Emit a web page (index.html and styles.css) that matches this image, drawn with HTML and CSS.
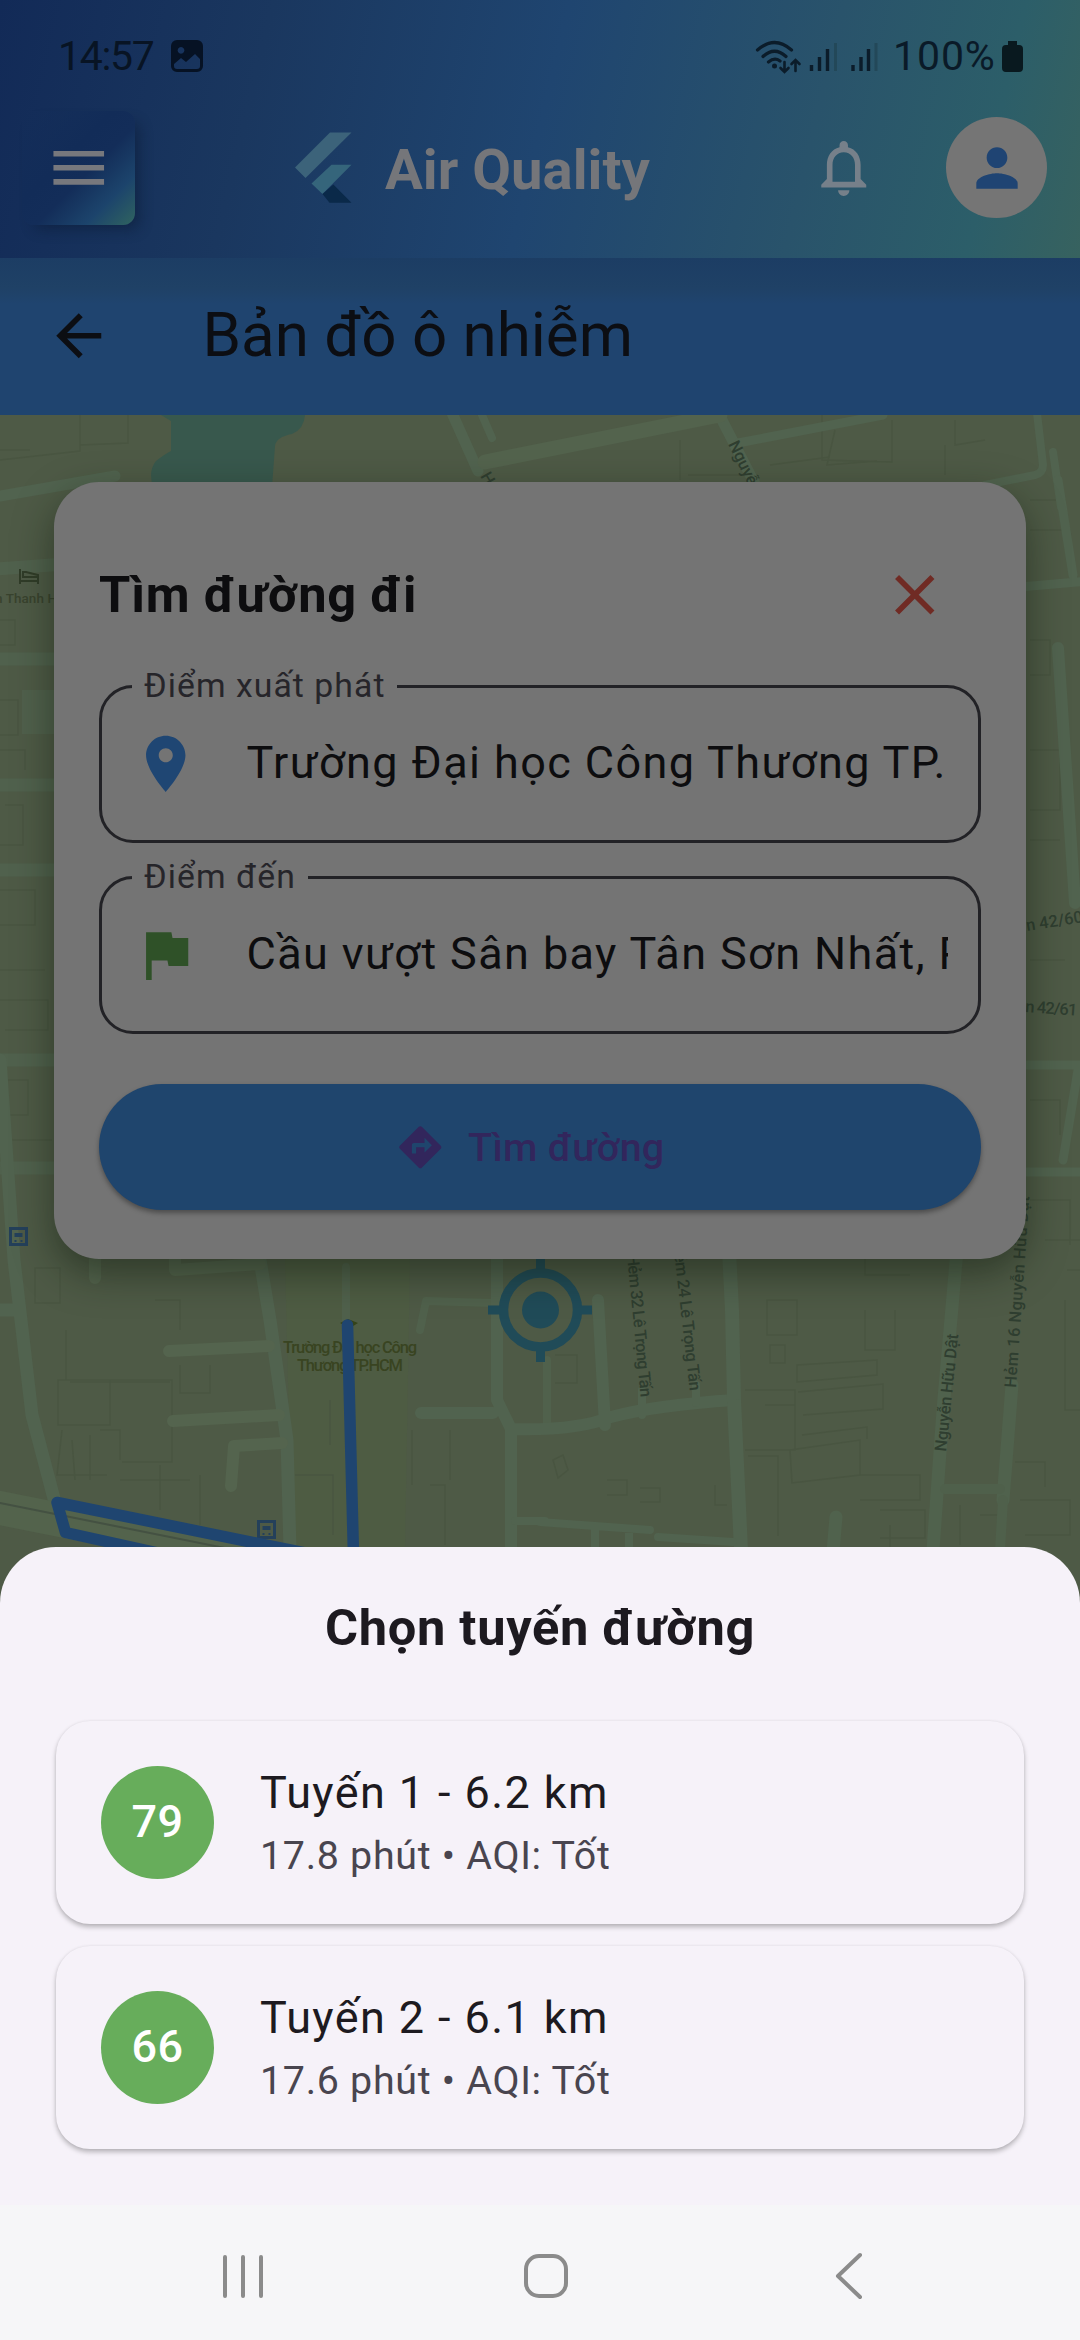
FILE: index.html
```html
<!DOCTYPE html>
<html lang="vi">
<head>
<meta charset="utf-8">
<title>Air Quality</title>
<link rel="stylesheet" href="styles.css">
</head>
<body>
<div class="screen">
  <header class="header">
    <div class="status">
      <span class="clock">14:57</span>
      <svg class="photo" width="32" height="32" viewBox="0 0 32 32"><path fill="#061224" fill-rule="evenodd" d="M6 0h20a6 6 0 0 1 6 6v20a6 6 0 0 1-6 6H6a6 6 0 0 1-6-6V6a6 6 0 0 1 6-6zM10 7a3.400 3.400 0 1 0 .01 0zM3 24l7-6 5 4 9-8 5 5v7q0 3-3 3H6q-3 0-3-3z"/></svg>
      <svg class="signals" width="124" height="36" viewBox="754 37 124 36">
        <g fill="none" stroke="#0b1c2a" stroke-width="3.200" stroke-linecap="round">
          <path d="M757.500 49Q774.500 34 791.500 49M763 55.500Q774.500 45 786 55.500M768.500 61Q774.500 56 780 60"/>
          <path stroke-width="2.600" d="M784.500 61v9M780.500 67l4 4 4-4M795.500 70V59.500M791.500 63l4-4 4 4"/>
        </g>
        <circle cx="774.500" cy="65" r="2.500" fill="#0b1c2a"/>
        <path stroke="#0b1c2a" stroke-width="3.400" d="M811.500 70v-6M819.500 70V56M827.500 70V48M853 70v-6M861 70V56M868.500 70V48"/>
        <path stroke="#234859" stroke-width="3" d="M835.500 70V42M876 70V42"/>
      </svg>
      <span class="percent">100%</span>
      <svg class="battery" width="21" height="31" viewBox="0 0 21 31"><path fill="#09191f" d="M6 0h9v4h2a4 4 0 0 1 4 4v19a4 4 0 0 1-4 4H4a4 4 0 0 1-4-4V8a4 4 0 0 1 4-4h2z"/></svg>
    </div>
    <div class="appbar">
      <div class="menu"><svg width="67.500" height="67.500" viewBox="0 0 24 24"><path fill="#77787d" d="M3 18h18v-2H3zM3 13h18v-2H3zM3 6v2h18V6z"/></svg></div>
      <svg class="logo" width="58" height="72" viewBox="294 132 58 72">
        <path fill="#3c637a" d="M295 167.500L330 132.500h21.500L305.500 178z"/>
        <path fill="#35657b" d="M311.500 183.500l20-18.800h20L322.500 194z"/>
        <path fill="#0a2949" d="M322.500 194l10.800-9.500 18.200 18.200h-22z"/>
      </svg>
      <h1 class="brand">Air Quality</h1>
      <svg class="bell" width="67.500" height="67.500" viewBox="0 0 24 24"><path fill="#76808a" d="M12 22c1.100 0 2-.9 2-2h-4c0 1.100.9 2 2 2zm6-6v-5c0-3.070-1.630-5.640-4.500-6.320V4c0-.83-.67-1.500-1.500-1.500s-1.500.67-1.500 1.500v.68C7.640 5.360 6 7.920 6 11v5l-2 2v1h16v-1l-2-2zm-2 1H8v-6c0-2.480 1.510-4.500 4-4.500s4 2.020 4 4.500v6z"/></svg>
      <div class="avatar"><svg width="62" height="62" viewBox="0 0 24 24"><path fill="#1f4473" d="M12 12c2.210 0 4-1.790 4-4s-1.790-4-4-4-4 1.790-4 4 1.790 4 4 4zm0 2c-2.670 0-8 1.340-8 4v2h16v-2c0-2.660-5.330-4-8-4z"/></svg></div>
    </div>
  </header>

  <div class="subbar">
    <svg width="67.500" height="67.500" viewBox="0 0 24 24"><path fill="#0c0e13" d="M20 11H7.830l5.590-5.590L12 4l-8 8 8 8 1.410-1.410L7.830 13H20v-2z"/></svg>
    <h2 class="page-title">Bản đồ ô nhiễm</h2>
  </div>

  <main class="map">
    <svg class="tiles" width="1080" height="1200" viewBox="0 415 1080 1200">
      <rect x="0" y="415" width="1080" height="1200" fill="#4e5a46"/>
      <path fill="#4f5d42" d="M285 1258h125l-5 290H292z" opacity=".7"/>
      <!-- building footprints -->
      <g fill="none" stroke="#495541" stroke-width="1.500">
        <path d="M0 460l80-9V415M80 445l48-2V415M0 450h30M680 440v40M688 475h70M835 430l-8 35 50-4M822 415v45l70 2v-42M945 445v30M955 420v25l30-5M770 465l60-8"/>
        <path d="M0 620h15v25H0M0 700h18v35H0M0 750h25v20M5 805h18v40H0M0 890h35v35H0M0 970h45M0 1000h48v30H5M8 1080h20v35H8M0 1140h52"/>
        <path d="M1030 500h35v30h-35M1030 640h20v35h-20M1030 750h30v60h-30M1030 840h30M1030 960h35M1030 1100h30v35M1030 1200h40v45"/>
        <path d="M35 1268h25v35H35zM66 1330v50h-8v45h52v-45H66M110 1380h62v82h-50M70 1382h100M180 1365v28h30v-28M62 1430l-5 45h50M72 1440l3 40M90 1435v45M100 1430h20v30M120 1480h70M160 1465v45M200 1475v50M295 1475h38v60M412 1430v55M430 1485h15v60M450 1430v50M330 1400v45M155 1300h25v30"/>
        <path d="M767 1300h30v35h-30zM770 1345h15v18h-15zM797 1365l80-5v15l-80 7zM798 1392l85-8v25l-80 6M745 1390h50v60h-50M765 1405h30v25M790 1450l70-10v35l-68 8zM802 1435l65-8v12M748 1456h30v80M860 1475h60v25h-60M880 1510h45v28h-45M910 1275h-45v-20M865 1310v40h30v-40M1015 1462h30v25M1020 1500h50v35h-45M1065 1300v110h30M555 1355h22v28h-22M553 1460l10-5 5 15-10 8zM607 1480h20v15h-20M640 1488h20v14h-20M715 1485v20h12"/>
        <path d="M1045 1240h35M1067 1270h20M890 1525v22M960 1505v40M980 1515h25"/>
      </g>
      <!-- water -->
      <path fill="#38584d" d="M161 415h144q-1 14-13 19-16 3-17 12l-3 41H153q-5-16 3-26 9-7 15-10v-30z"/>
      <!-- streets -->
      <g fill="none" stroke="#51634f" stroke-linejoin="round" stroke-linecap="round">
        <path stroke-width="11" d="M452 413l26 58M722 420l36 70M0 496l115-20"/>
        <path stroke-width="8" d="M482 415l10 23M1037 413l6 52q0 8-8 10l-50 10M1053 452l8 55"/>
        <path stroke-width="15" stroke="#53634d" d="M485 462l235-47"/>
        <path stroke-width="9" d="M738 443l145-28"/>
        <path stroke-width="13" d="M-5 569l70-5M-5 659h70M-5 785h70M-5 870h70M-5 1060h70M-5 1168h70" opacity=".8"/>
        <path stroke-width="9" d="M1058 480l15 95M1020 587l70-6M1020 1065h70M1078 1070l-15 90M1020 1172h70"/>
        <path stroke-width="12" d="M1058 648l17 255"/>
        <path fill="#51634f" stroke="none" d="M22 690h50v44H22z" opacity=".7"/>
        <path stroke-width="13" d="M0 1060l14 200 18 155 25 95M255 1230l15 90 17 120 3 110M-5 1310h20"/>
        <path stroke-width="12" d="M169 1351l100-5M173 1421l106-6M231 1486l3-40 48-3M175 1240v30l85-6M95 1250v28" stroke="#54644e"/>
        <path stroke-width="8" d="M346 1267v55M420 1330l6-29 66 2M547 1360v70" stroke="#50614c"/>
        <path stroke-width="12" d="M421 1413h72M497 1250v150l14 29v125M511 1429q65 2 100-12 45-12 124-17M598 1300l7 125"/>
        <path stroke-width="14" d="M729 1250l3 60 2 90 7 150"/>
        <path stroke-width="8" d="M642 1390v25M696 1385v18M540 1522l110 8M658 1537l75 5M595 1530v20M629 1530v20M515 1521h30"/>
        <path stroke-width="13" d="M836 1517l-3 35M957 1250l-14 160-10 140M1012 1385l-9 115" stroke="#50624d"/>
        <path stroke-width="10" d="M945 1489h55M1003 1500l-3 50" stroke="#4f604b"/>
        <path stroke-width="34" d="M-20 1504l330 66" stroke="#53634c"/>
        <path stroke-width="2" d="M0 1503l300 60" stroke="#445142"/>
      </g>
      <!-- place labels -->
      <g class="labels">
        <text x="350" y="1353" text-anchor="middle" textLength="134" fill="#394421">Trường Đại học Công</text>
        <text x="350" y="1371" text-anchor="middle" textLength="106" fill="#394421">Thương TP.HCM</text>
        <text transform="translate(627 1255) rotate(84.500)" textLength="143">Hẻm 32 Lê Trọng Tấn</text>
        <text transform="translate(673 1243) rotate(83.500)" textLength="149">Hẻm 24 Lê Trọng Tấn</text>
        <text transform="translate(946 1452) rotate(-84)" textLength="118">Nguyễn Hữu Dật</text>
        <text transform="translate(1016 1388) rotate(-86)" textLength="192">Hẻm 16 Nguyễn Hữu Dật</text>
        <text transform="translate(1027 931) rotate(-9)">n 42/60</text>
        <text transform="translate(1025 1012) rotate(4)" textLength="52">n 42/61</text>
        <text x="-5" y="603" textLength="62" class="small">n Thanh H</text>
        <text transform="translate(480 476) rotate(60)">Hẻm</text>
        <text transform="translate(728 444) rotate(64)">Nguyễn</text>
      </g>
      <path fill="none" stroke="#303c28" stroke-width="2" d="M20 569v15M20 581h18v3M38 580v-5l-12-3h-3v5h15"/>
      <!-- bus stops -->
      <g id="stops">
        <path fill="#24405a" fill-rule="evenodd" d="M9 1227h19v19H9zM12 1230v13h13v-13z"/>
        <path fill="#24405a" fill-rule="evenodd" d="M257 1520h19v19h-19zM260 1523v13h13v-13z"/>
        <path fill="#24405a" d="M14.500 1233h8v4h-8zM14.500 1240h2v2h-2zM20.500 1240h2v2h-2zM262.500 1526h8v4h-8zM262.500 1533h2v2h-2zM268.500 1533h2v2h-2z"/>
      </g>
      <!-- locate crosshair -->
      <g fill="none" stroke="#204b58">
        <circle cx="540.500" cy="1310" r="37" stroke-width="9.500"/>
        <path stroke-width="9" d="M540.500 1258v14M540.500 1348v14M488 1310h14M579 1310h13"/>
        <circle cx="540.500" cy="1310" r="18.500" fill="#204b58" stroke="none"/>
      </g>
      <!-- route -->
      <path fill="#354319" d="M340 1323l8-4 10 4-8 5z"/>
      <path fill="none" stroke="#1f4570" stroke-width="11.500" stroke-linecap="round" stroke-linejoin="round" d="M347.500 1325l6 230M310 1554L57 1502.500l8.500 30L190 1560"/>
    </svg>

    <section class="finder">
      <div class="finder-head">
        <h3 class="finder-title">Tìm đường đi</h3>
        <svg width="67.500" height="67.500" viewBox="0 0 24 24"><path fill="#702b24" d="M19 6.410L17.590 5 12 10.590 6.410 5 5 6.410 10.590 12 5 17.590 6.410 19 12 13.410 17.590 19 19 17.590 13.410 12z"/></svg>
      </div>
      <div class="field">
        <span class="field-label">Điểm xuất phát</span>
        <svg width="67.500" height="67.500" viewBox="0 0 24 24"><path fill="#1f4673" d="M12 2C8.130 2 5 5.130 5 9c0 5.250 7 13 7 13s7-7.750 7-13c0-3.870-3.130-7-7-7zm0 9.500c-1.380 0-2.500-1.120-2.500-2.500s1.120-2.500 2.500-2.500 2.500 1.120 2.500 2.500-1.120 2.500-2.500 2.500z"/></svg>
        <span class="field-value">Trường Đại học Công Thương TP.</span>
      </div>
      <div class="field">
        <span class="field-label">Điểm đến</span>
        <svg width="67.500" height="67.500" viewBox="0 0 24 24"><path fill="#2f5128" d="M14.400 6L14 4H5v17h2v-7h5.600l.4 2h7V6z"/></svg>
        <span class="field-value">Cầu vượt Sân bay Tân Sơn Nhất, Phường</span>
      </div>
      <div class="find">
        <svg width="50.600" height="50.600" viewBox="0 0 24 24"><path fill="#32265c" d="M21.710 11.290l-9-9c-.39-.39-1.020-.39-1.410 0l-9 9c-.39.39-.39 1.020 0 1.410l9 9c.39.39 1.020.39 1.410 0l9-9c.39-.38.39-1.010 0-1.410zM14 14.500V12h-4v3H8v-4c0-.55.45-1 1-1h5V7.500l3.500 3.500-3.500 3.500z"/></svg>
        <span>Tìm đường</span>
      </div>
    </section>
  </main>

  <section class="sheet">
    <h3 class="sheet-title">Chọn tuyến đường</h3>
    <div class="routes">
      <article class="route">
        <div class="aqi">79</div>
        <div class="info"><div class="name">Tuyến 1 - 6.2 km</div><div class="meta">17.8 phút • AQI: Tốt</div></div>
      </article>
      <article class="route">
        <div class="aqi">66</div>
        <div class="info"><div class="name">Tuyến 2 - 6.1 km</div><div class="meta">17.6 phút • AQI: Tốt</div></div>
      </article>
    </div>
  </section>

  <nav class="navbar">
    <svg width="40" height="44" viewBox="0 0 40 44"><path fill="none" stroke="#8b8b8b" stroke-width="4" stroke-linecap="round" d="M2 3v39M20 3v39M38 3v39"/></svg>
    <svg class="home" width="46" height="46" viewBox="0 0 46 46"><rect x="3" y="3" width="40" height="40" rx="13" fill="none" stroke="#8b8b8b" stroke-width="4"/></svg>
    <svg width="28" height="48" viewBox="0 0 28 48"><path fill="none" stroke="#8b8b8b" stroke-width="4" stroke-linecap="round" stroke-linejoin="round" d="M25 3L3 24l22 21"/></svg>
  </nav>
</div>
</body>
</html>
```

FILE: styles.css
```css
* {
  box-sizing: border-box;
}

body {
  margin: 0;
  font-family: Roboto, "Noto Sans", sans-serif;
}

h1, h2, h3 {
  margin: 0;
  font-weight: 700;
}

svg {
  display: block;
  flex: none;
}

.screen {
  width: 1080px;
  height: 2340px;
  display: flex;
  flex-direction: column;
  overflow: hidden;
  background: #4e5a46;
}

/* top bars */
.header {
  height: 258px;
  flex: none;
  background: linear-gradient(103.4deg, #122a57 0%, #1a375f 24%, #1f4570 50%, #29536b 74%, #2c5e69 90%, #37625f 100%);
}

.status {
  height: 110px;
  display: flex;
  align-items: center;
  padding: 2px 57px 0 58px;
  font-size: 41px;
  color: #081424;
}

.clock {
  width: 96px;
  font-size: 41px;
  letter-spacing: -1.300px;
  line-height: 48px;
}

.photo {
  margin-left: 17px;
}

.signals {
  margin-left: auto;
}

.percent {
  width: 101px;
  margin-left: 15px;
  letter-spacing: 0.900px;
  line-height: 48px;
  color: #0a1a28;
}

.battery {
  margin-left: 8px;
}

.appbar {
  height: 115px;
  display: flex;
  align-items: center;
  padding: 0 33px 0 22px;
}

.menu {
  width: 113px;
  height: 114px;
  display: grid;
  place-items: center;
  border-radius: 12px;
  background: linear-gradient(135deg, rgba(18, 44, 88, 0) 0%, #122c58 40%, #132d59 56%, #1c446c 78%, #30645f 100%);
  box-shadow: 8px 8px 14px -4px rgba(8, 22, 45, 0.45);
}

.logo {
  margin-left: 159px;
}

.brand {
  width: 300px;
  margin-left: 33px;
  padding-top: 4px;
  font-size: 56.250px;
  line-height: 66px;
  color: #75767a;
  white-space: nowrap;
}

.bell {
  margin-left: 125px;
}

.avatar {
  width: 101px;
  height: 101px;
  margin-left: auto;
  display: grid;
  place-items: center;
  border-radius: 50%;
  background: #757575;
}

.subbar {
  height: 157px;
  flex: none;
  display: flex;
  align-items: center;
  gap: 90px;
  padding-left: 45px;
  padding-bottom: 2px;
  background: linear-gradient(#1c3d64 0, #1f4166 30px, #1f446f 46px);
}

.page-title {
  padding-bottom: 2px;
  font-size: 61.900px;
  font-weight: 400;
  line-height: 72px;
  color: #0c0e13;
}

/* map */
.map {
  position: relative;
  height: 1132px;
  flex: none;
  padding: 67px 54px 0;
}

.tiles {
  position: absolute;
  left: 0;
  top: 0;
}

.labels {
  font-family: Roboto, "Noto Sans", sans-serif;
  font-size: 16.500px;
  font-weight: 500;
  fill: #2f3e30;
}

.labels .small {
  font-size: 13.500px;
  fill: #39432e;
}

.finder {
  position: relative;
  height: 777px;
  padding: 45px;
  display: flex;
  flex-direction: column;
  border-radius: 45px;
  background: #747474;
  box-shadow: 0 14px 38px rgba(15, 25, 12, 0.5);
}

.finder-head {
  height: 135px;
  display: flex;
  align-items: center;
  justify-content: space-between;
  padding-right: 33px;
  margin-bottom: 23px;
}

.finder-title {
  font-size: 50.600px;
  line-height: 60px;
  letter-spacing: 0.800px;
  color: #0d0d0f;
}

.field {
  position: relative;
  height: 158px;
  flex: none;
  display: flex;
  align-items: center;
  gap: 47px;
  margin-bottom: 33px;
  padding: 0 30px;
  border: 3px solid #222226;
  border-radius: 34px;
}

.field-label {
  position: absolute;
  left: 30px;
  top: -22px;
  padding: 0 12px;
  font-size: 33.750px;
  line-height: 40px;
  letter-spacing: 1.050px;
  background: #747474;
  color: #26252a;
}

.field-value {
  flex: 1;
  overflow: hidden;
  white-space: nowrap;
  font-size: 45px;
  line-height: 60px;
  letter-spacing: 1.400px;
  color: #0d0d0f;
  margin-top: -3px;
}

.find {
  height: 126px;
  flex: none;
  margin-top: 17px;
  padding-right: 20px;
  display: flex;
  align-items: center;
  justify-content: center;
  gap: 22px;
  border-radius: 63px;
  background: #1f456d;
  color: #32265c;
  font-size: 39.400px;
  font-weight: 500;
  letter-spacing: 0.300px;
  box-shadow: 0 3px 5px rgba(0, 0, 0, 0.35);
}

/* bottom sheet */
.sheet {
  position: relative;
  height: 658px;
  flex: none;
  padding: 51px 56px 0;
  border-radius: 56px 56px 0 0;
  background: #f6f2f9;
}

.sheet-title {
  margin-bottom: 63px;
  text-align: center;
  font-size: 50.600px;
  line-height: 60px;
  letter-spacing: 0.700px;
  color: #1d1a20;
}

.routes {
  display: flex;
  flex-direction: column;
  gap: 22px;
}

.route {
  height: 203px;
  display: flex;
  align-items: center;
  gap: 46px;
  padding: 0 45px;
  border-radius: 34px;
  background: #f6f2f9;
  box-shadow: 0 3px 5px rgba(0, 0, 0, 0.26), 0 0 3px rgba(0, 0, 0, 0.06);
}

.aqi {
  width: 113px;
  height: 113px;
  display: grid;
  place-items: center;
  padding-bottom: 2px;
  border-radius: 50%;
  background: #67ad5b;
  color: #fff;
  font-size: 45px;
  font-weight: 500;
  letter-spacing: 0.400px;
}

.name {
  margin-top: -3px;
  font-size: 45px;
  line-height: 67px;
  letter-spacing: 1.400px;
  color: #1d1a20;
}

.meta {
  padding-top: 2px;
  font-size: 39.400px;
  line-height: 56px;
  letter-spacing: 0.700px;
  color: #49454f;
}

/* system navigation */
.navbar {
  position: relative;
  flex: 1;
  display: flex;
  align-items: center;
  padding: 6px 217px 0 223px;
  justify-content: space-between;
  background: #f6f6f8;
}

.home {
  margin-right: 7px;
}
```
